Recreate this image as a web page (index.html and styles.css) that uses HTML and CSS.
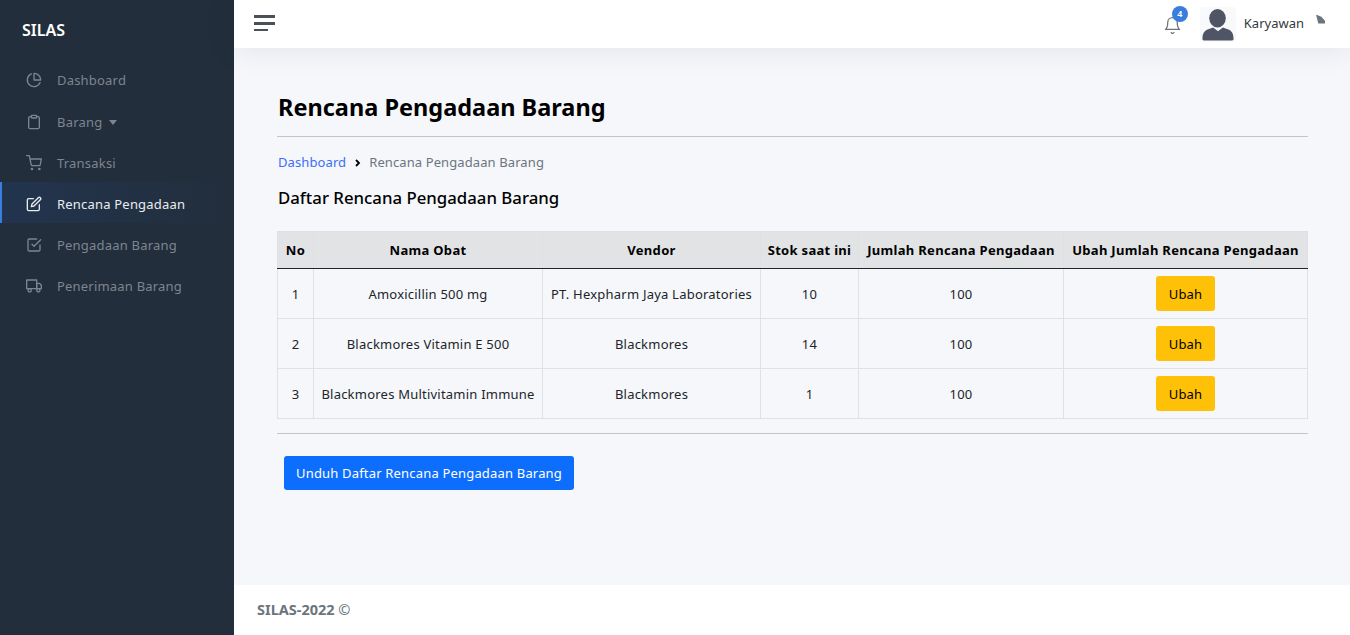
FILE: index.html
```html
<!DOCTYPE html>
<html lang="en">
<head>
    <meta charset="UTF-8">
    <meta name="viewport" content="width=device-width, initial-scale=1.0">
    <title>Rencana Pengadaan Barang</title>
    <link rel="stylesheet" href="styles.css">
</head>
<body>
    <aside class="sidebar">
        <div class="brand">SILAS</div>
        <ul class="nav">
            <li class="nav-item">
                <svg class="nav-icon" viewBox="0 0 24 24"><path d="M21.2 15.9A10 10 0 1 1 8 2.8"/><path d="M22 12A10 10 0 0 0 12 2v10z"/></svg>
                <span>Dashboard</span>
            </li>
            <li class="nav-item">
                <svg class="nav-icon" viewBox="0 0 24 24"><path d="M16 4h2a2 2 0 0 1 2 2v14a2 2 0 0 1-2 2H6a2 2 0 0 1-2-2V6a2 2 0 0 1 2-2h2"/><rect x="8" y="2" width="8" height="4" rx="1"/></svg>
                <span>Barang</span>
                <i class="caret"></i>
            </li>
            <li class="nav-item">
                <svg class="nav-icon" viewBox="0 0 24 24"><circle cx="9" cy="21" r="1"/><circle cx="20" cy="21" r="1"/><path d="M1 1h4l2.7 13.4a2 2 0 0 0 2 1.6h9.7a2 2 0 0 0 2-1.6L23 6H6"/></svg>
                <span>Transaksi</span>
            </li>
            <li class="nav-item active">
                <svg class="nav-icon" viewBox="0 0 24 24"><path d="M11 4H4a2 2 0 0 0-2 2v14a2 2 0 0 0 2 2h14a2 2 0 0 0 2-2v-7"/><path d="M18.5 2.5a2.1 2.1 0 0 1 3 3L12 15l-4 1 1-4z"/></svg>
                <span>Rencana Pengadaan</span>
            </li>
            <li class="nav-item">
                <svg class="nav-icon" viewBox="0 0 24 24"><path d="M9 11l3 3L22 4"/><path d="M21 12v7a2 2 0 0 1-2 2H5a2 2 0 0 1-2-2V5a2 2 0 0 1 2-2h11"/></svg>
                <span>Pengadaan Barang</span>
            </li>
            <li class="nav-item">
                <svg class="nav-icon" viewBox="0 0 24 24"><rect x="1" y="3" width="15" height="13"/><path d="M16 8h4l3 3v5h-7z"/><circle cx="5.5" cy="18.5" r="2.5"/><circle cx="18.5" cy="18.5" r="2.5"/></svg>
                <span>Penerimaan Barang</span>
            </li>
        </ul>
    </aside>

    <div class="main">
        <header class="topbar">
            <div class="hamburger"><i></i><i></i><i class="short"></i></div>
            <div class="topbar-right">
                <div class="bell">
                    <svg viewBox="0 0 24 24"><path d="M18 8A6 6 0 0 0 6 8c0 7-3 9-3 9h18s-3-2-3-9"/><path d="M13.7 21a2 2 0 0 1-3.4 0"/></svg>
                    <span class="badge">4</span>
                </div>
                <div class="avatar">
                    <svg viewBox="0 0 36 36"><ellipse cx="17.500" cy="11.500" rx="8.500" ry="9.500"/><path d="M2 33c0-6 2-8.500 6-10l5-2 5 4 5-4 5 2c4 1.500 6 4 6 10 0 1-.5 1.500-1.500 1.500H3.500C2.500 34.500 2 34 2 33z"/></svg>
                </div>
                <span class="username">Karyawan</span>
                <i class="user-caret"></i>
            </div>
        </header>

        <main class="content">
            <h1 class="page-title">Rencana Pengadaan Barang</h1>
            <hr class="rule">
            <nav class="breadcrumb">
                <a href="#">Dashboard</a>
                <svg class="crumb-sep" viewBox="0 0 8 8"><path d="M2 1l3 3-3 3"/></svg>
                <span>Rencana Pengadaan Barang</span>
            </nav>
            <h2 class="section-title">Daftar Rencana Pengadaan Barang</h2>

            <table class="data-table">
                <colgroup>
                    <col class="col-no">
                    <col class="col-name">
                    <col class="col-vendor">
                    <col class="col-stock">
                    <col class="col-plan">
                    <col>
                </colgroup>
                <thead>
                    <tr>
                        <th>No</th>
                        <th>Nama Obat</th>
                        <th>Vendor</th>
                        <th>Stok saat ini</th>
                        <th>Jumlah Rencana Pengadaan</th>
                        <th>Ubah Jumlah Rencana Pengadaan</th>
                    </tr>
                </thead>
                <tbody>
                    <tr>
                        <td>1</td>
                        <td>Amoxicillin 500 mg</td>
                        <td>PT. Hexpharm Jaya Laboratories</td>
                        <td>10</td>
                        <td>100</td>
                        <td><a class="btn btn-warning" href="#">Ubah</a></td>
                    </tr>
                    <tr>
                        <td>2</td>
                        <td>Blackmores Vitamin E 500</td>
                        <td>Blackmores</td>
                        <td>14</td>
                        <td>100</td>
                        <td><a class="btn btn-warning" href="#">Ubah</a></td>
                    </tr>
                    <tr>
                        <td>3</td>
                        <td>Blackmores Multivitamin Immune</td>
                        <td>Blackmores</td>
                        <td>1</td>
                        <td>100</td>
                        <td><a class="btn btn-warning" href="#">Ubah</a></td>
                    </tr>
                </tbody>
            </table>

            <hr class="rule rule-bottom">
            <a class="btn btn-primary" href="#">Unduh Daftar Rencana Pengadaan Barang</a>
        </main>

        <footer class="footer">SILAS-2022 <span class="copy">©</span></footer>
    </div>
</body>
</html>
```

FILE: styles.css
```css
* {
    box-sizing: border-box;
}
html, body {
    height: 100%;
}
body {
    margin: 0;
    display: flex;
    height: 635px;
    overflow: hidden;
    font-family: "Noto Sans", "Open Sans", sans-serif;
    font-size: 13px;
    color: #212529;
    background: #f5f7fb;
}

/* sidebar */
.sidebar {
    width: 234px;
    flex: none;
    background: #222e3c;
}
.brand {
    padding: 19px 22px 0;
    height: 58.900px;
    font-size: 16px;
    font-weight: 600;
    line-height: 22px;
    color: #fff;
}
.nav {
    list-style: none;
    margin: 0;
    padding: 0;
}
.nav-item {
    display: flex;
    align-items: center;
    height: 41.100px;
    padding: 2px 0 0 26px;
    color: #7e858e;
    letter-spacing: 0.2px;
    border-left: 0 solid #3b7ddd;
}
.nav-icon {
    width: 16px;
    height: 16px;
    margin-right: 15px;
    fill: none;
    stroke: currentColor;
    stroke-width: 2;
    stroke-linecap: round;
    stroke-linejoin: round;
}
.nav-item.active {
    padding-left: 24px;
    border-left-width: 2px;
    color: #e9ecef;
    background: linear-gradient(90deg, #22344e, #222e3c);
}
.caret {
    margin: 1px 0 0 7px;
    border-left: 4.500px solid transparent;
    border-right: 4.500px solid transparent;
    border-top: 5px solid #7e858e;
}

/* topbar */
.main {
    flex: 1;
    display: flex;
    flex-direction: column;
    min-width: 0;
}
.topbar {
    position: relative;
    height: 48px;
    flex: none;
    display: flex;
    align-items: center;
    justify-content: space-between;
    padding: 0 22px 2px 20px;
    background: #fff;
    box-shadow: 0 0 32px rgba(33, 37, 41, 0.1);
}
.hamburger {
    display: flex;
    flex-direction: column;
    gap: 4px;
    width: 21px;
}
.hamburger i {
    height: 3px;
    background: #495057;
}
.hamburger .short {
    width: 14px;
    height: 2px;
}
.topbar-right {
    display: flex;
    align-items: center;
}
.bell {
    position: relative;
    width: 18px;
    height: 18px;
    margin-right: 19px;
    top: 2px;
}
.bell svg {
    display: block;
    width: 19px;
    height: 19px;
    fill: none;
    stroke: #6c757d;
    stroke-width: 1.600;
    stroke-linecap: round;
    stroke-linejoin: round;
}
.badge {
    position: absolute;
    top: -10px;
    right: -7px;
    width: 16px;
    height: 16px;
    border-radius: 50%;
    background: #3b7ddd;
    color: #fff;
    font-size: 9px;
    font-weight: 600;
    line-height: 16px;
    text-align: center;
}
.avatar {
    width: 36px;
    height: 35px;
    margin: 3px 8px 0 0;
    background: #f8f9fa;
    border-radius: 4px;
}
.avatar svg {
    display: block;
    width: 36px;
    height: 35px;
    fill: #4f5565;
    filter: blur(0.4px);
}
.username {
    font-size: 13px;
    color: #343a40;
}
.user-caret {
    width: 9px;
    height: 9px;
    margin: -8px 3px 0 12px;
    background: #6c757d;
    clip-path: polygon(0 0, 60% 25%, 100% 70%, 100% 100%, 25% 100%);
}

/* content */
.content {
    flex: 1;
    padding: 43px 42px 0 44px;
}
.page-title {
    margin: 0;
    font-size: 23.500px;
    font-weight: 700;
    line-height: 33px;
    color: #000;
}
.rule {
    height: 1px;
    margin: 12px 0 0 -1px;
    border: 0;
    background: #c4c5c9;
}
.breadcrumb {
    display: flex;
    align-items: center;
    margin-top: 15px;
    line-height: 20px;
    letter-spacing: 0.1px;
    color: #6c757d;
}
.breadcrumb a {
    color: #3b6ef8;
    text-decoration: none;
}
.crumb-sep {
    width: 8px;
    height: 8px;
    margin: 1px 7px 0 8px;
    fill: none;
    stroke: #000;
    stroke-width: 1.800;
}
.section-title {
    margin: 14px 0 0;
    font-size: 16.800px;
    font-weight: 500;
    line-height: 24px;
    color: #000;
}
.data-table {
    width: 1031px;
    margin: 21px 0 0 -1px;
    table-layout: fixed;
    border-collapse: collapse;
    text-align: center;
}
.col-no { width: 36px; }
.col-name { width: 229px; }
.col-vendor { width: 218px; }
.col-stock { width: 98px; }
.col-plan { width: 205px; }
.data-table th,
.data-table td {
    padding: 0;
    border: 1px solid #dee2e6;
    white-space: nowrap;
}
.data-table th {
    height: 37px;
    background: #e2e3e5;
    border-color: #dee0e2;
    border-bottom: 1px solid #212529;
    color: #000;
    font-weight: 700;
    letter-spacing: 0.3px;
}
.data-table td {
    height: 50px;
    letter-spacing: 0.22px;
}
.btn {
    display: inline-block;
    border-radius: 3px;
    text-decoration: none;
    font-size: 13px;
    line-height: 34px;
    letter-spacing: 0.18px;
    vertical-align: middle;
}
.btn-warning {
    padding: 0.5px 12.500px 0;
    background: #ffc107;
    color: #000;
}
.btn-primary {
    margin: 22px 0 0 6px;
    padding: 0 12px;
    background: #0d6efd;
    color: #fff;
}
.rule-bottom {
    margin-top: 14px;
}

/* footer */
.footer {
    height: 50px;
    flex: none;
    padding: 0 23px;
    line-height: 49px;
    background: #fff;
    color: #6c757d;
    font-size: 14.500px;
    font-weight: 700;
}
.copy {
    font-weight: 400;
}
```
